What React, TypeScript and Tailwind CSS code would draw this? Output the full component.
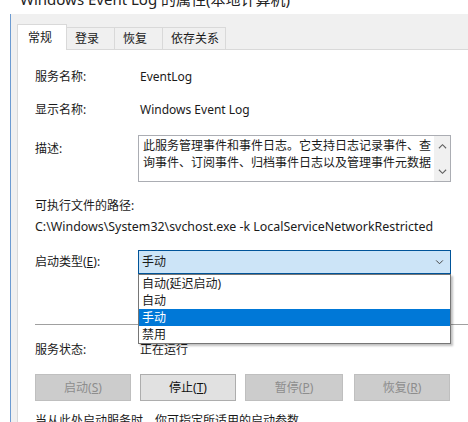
import React from "react";

const font = "font-['Noto_Sans','Noto_Sans_CJK_SC',sans-serif]";

const Chevron = ({ up = false, className = "" }: { up?: boolean; className?: string }) => (
  <svg viewBox="0 0 10 6" className={className} fill="none" stroke="currentColor" strokeWidth="1.2">
    {up ? <path d="M1 5.5 5 1.5 9 5.5" /> : <path d="M1 0.5 5 4.5 9 0.5" />}
  </svg>
);

const Tab = ({ label, active = false, width }: { label: string; active?: boolean; width: string }) =>
  active ? (
    <div className={`${width} relative z-10 -mb-px flex h-[26px] items-center bg-white pl-[10px] border border-b-0 border-[#d9d9d9]`}>{label}</div>
  ) : (
    <div className={`${width} flex h-[22px] items-center bg-[#f0f0f0] pl-[8px] border border-l-0 border-b-0 border-[#d9d9d9]`}>{label}</div>
  );

const Button = ({ label, hotkey, enabled = false, width = "w-[96px]", className = "" }: { label: string; hotkey: string; enabled?: boolean; width?: string; className?: string }) => (
  <div
    className={`${width} ${className} flex h-[27px] items-center justify-center border ${
      enabled ? "bg-[#e1e1e1] border-[#adadad] text-[#111]" : "bg-[#cccccc] border-[#bfbfbf] text-[#8d8d8d]"
    }`}
  >
    {label}(<span className="underline">{hotkey}</span>)
  </div>
);

export default function App() {
  return (
    <div className={`${font} relative h-[422px] w-[468px] overflow-hidden bg-white text-[12px] text-[#1a1a1a]`}>
      {/* window caption, mostly scrolled off the top */}
      <div className="relative h-[14px] overflow-hidden">
        <div className="absolute left-[20px] top-[-11px] text-[15px] leading-[20px] text-[#222]">Windows Event Log 的属性(本地计算机)</div>
      </div>

      <div className="flex h-[408px]">
        <div className="w-[10px] shrink-0 bg-white" />
        <div className="w-px shrink-0 bg-[#6c9bd2]" />
        <div className="flex-1 bg-[#f0f0f0] pl-[6px] pt-[10px]">
          {/* tab strip */}
          <div className="flex items-end">
            <Tab label="常规" active width="w-[50px]" />
            <Tab label="登录" width="w-[48px]" />
            <Tab label="恢复" width="w-[48px]" />
            <Tab label="依存关系" width="w-[63px]" />
          </div>

          {/* tab page */}
          <div className="relative h-[400px] border-t border-l border-[#d9d9d9] bg-white pl-[17px] pt-[17px]">
            <div className="flex h-[20px] items-center">
              <div className="w-[103px]">服务名称:</div>
              <div className="pl-[2px]">EventLog</div>
            </div>
            <div className="mt-[13px] flex h-[20px] items-center">
              <div className="w-[103px]">显示名称:</div>
              <div className="pl-[2px]">Windows Event Log</div>
            </div>

            <div className="mt-[15px] flex">
              <div className="w-[103px] pt-[4px] leading-[20px]">描述:</div>
              <div className="flex h-[47px] w-[313px] border border-[#abadb3]">
                <div className="flex-1 pl-[4px] pt-[1px] leading-[17px]">
                  此服务管理事件和事件日志。它支持日志记录事件、查询事件、订阅事件、归档事件日志以及管理事件元数据
                </div>
                <div className="flex w-[16px] flex-col items-center bg-[#f0f0f0] pt-[7px] text-[#606060]">
                  <Chevron up className="h-[6px] w-[9px]" />
                  <Chevron className="mt-[20px] h-[6px] w-[9px]" />
                </div>
              </div>
            </div>

            <div className="mt-[14px] flex h-[20px] items-center">可执行文件的路径:</div>
            <div className="mt-[1px] flex h-[20px] items-center text-[12.4px]">C:\Windows\System32\svchost.exe -k LocalServiceNetworkRestricted</div>

            <div className="mt-[13px] flex items-center">
              <div className="w-[103px]">
                启动类型(<span className="underline">E</span>):
              </div>
              <div className="relative">
                <div className="flex h-[24px] w-[313px] items-center justify-between border border-[#005499] bg-[#cce4f7] pl-[3px] pr-[6px]">
                  <span>手动</span>
                  <Chevron className="h-[5px] w-[9px] text-[#444]" />
                </div>
                {/* open drop-down list */}
                <div className="absolute left-0 top-[24px] z-20 w-[313px] border border-[#767676] bg-white shadow-[2px_2px_2px_rgba(0,0,0,0.25)]">
                  <div className="flex h-[17px] items-center pl-[3px]">自动(延迟启动)</div>
                  <div className="flex h-[17px] items-center pl-[3px]">自动</div>
                  <div className="flex h-[17px] items-center bg-[#0078d7] pl-[3px] text-white">手动</div>
                  <div className="flex h-[17px] items-center pl-[3px]">禁用</div>
                </div>
              </div>
            </div>

            <div className="mt-[50px] h-px bg-[#a0a0a0]" />

            <div className="mt-[15px] flex h-[20px] items-center">
              <div className="w-[103px]">服务状态:</div>
              <div className="pl-[2px]">正在运行</div>
            </div>

            <div className="mt-[14px] flex">
              <Button label="启动" hotkey="S" />
              <Button label="停止" hotkey="T" enabled className="ml-[9px]" />
              <Button label="暂停" hotkey="P" width="w-[98px]" className="ml-[9px]" />
              <Button label="恢复" hotkey="R" className="ml-[11px]" />
            </div>

            <div className="mt-[10px] flex h-[20px] items-center">当从此处启动服务时，你可指定所适用的启动参数。</div>
          </div>
        </div>
      </div>
    </div>
  );
}
